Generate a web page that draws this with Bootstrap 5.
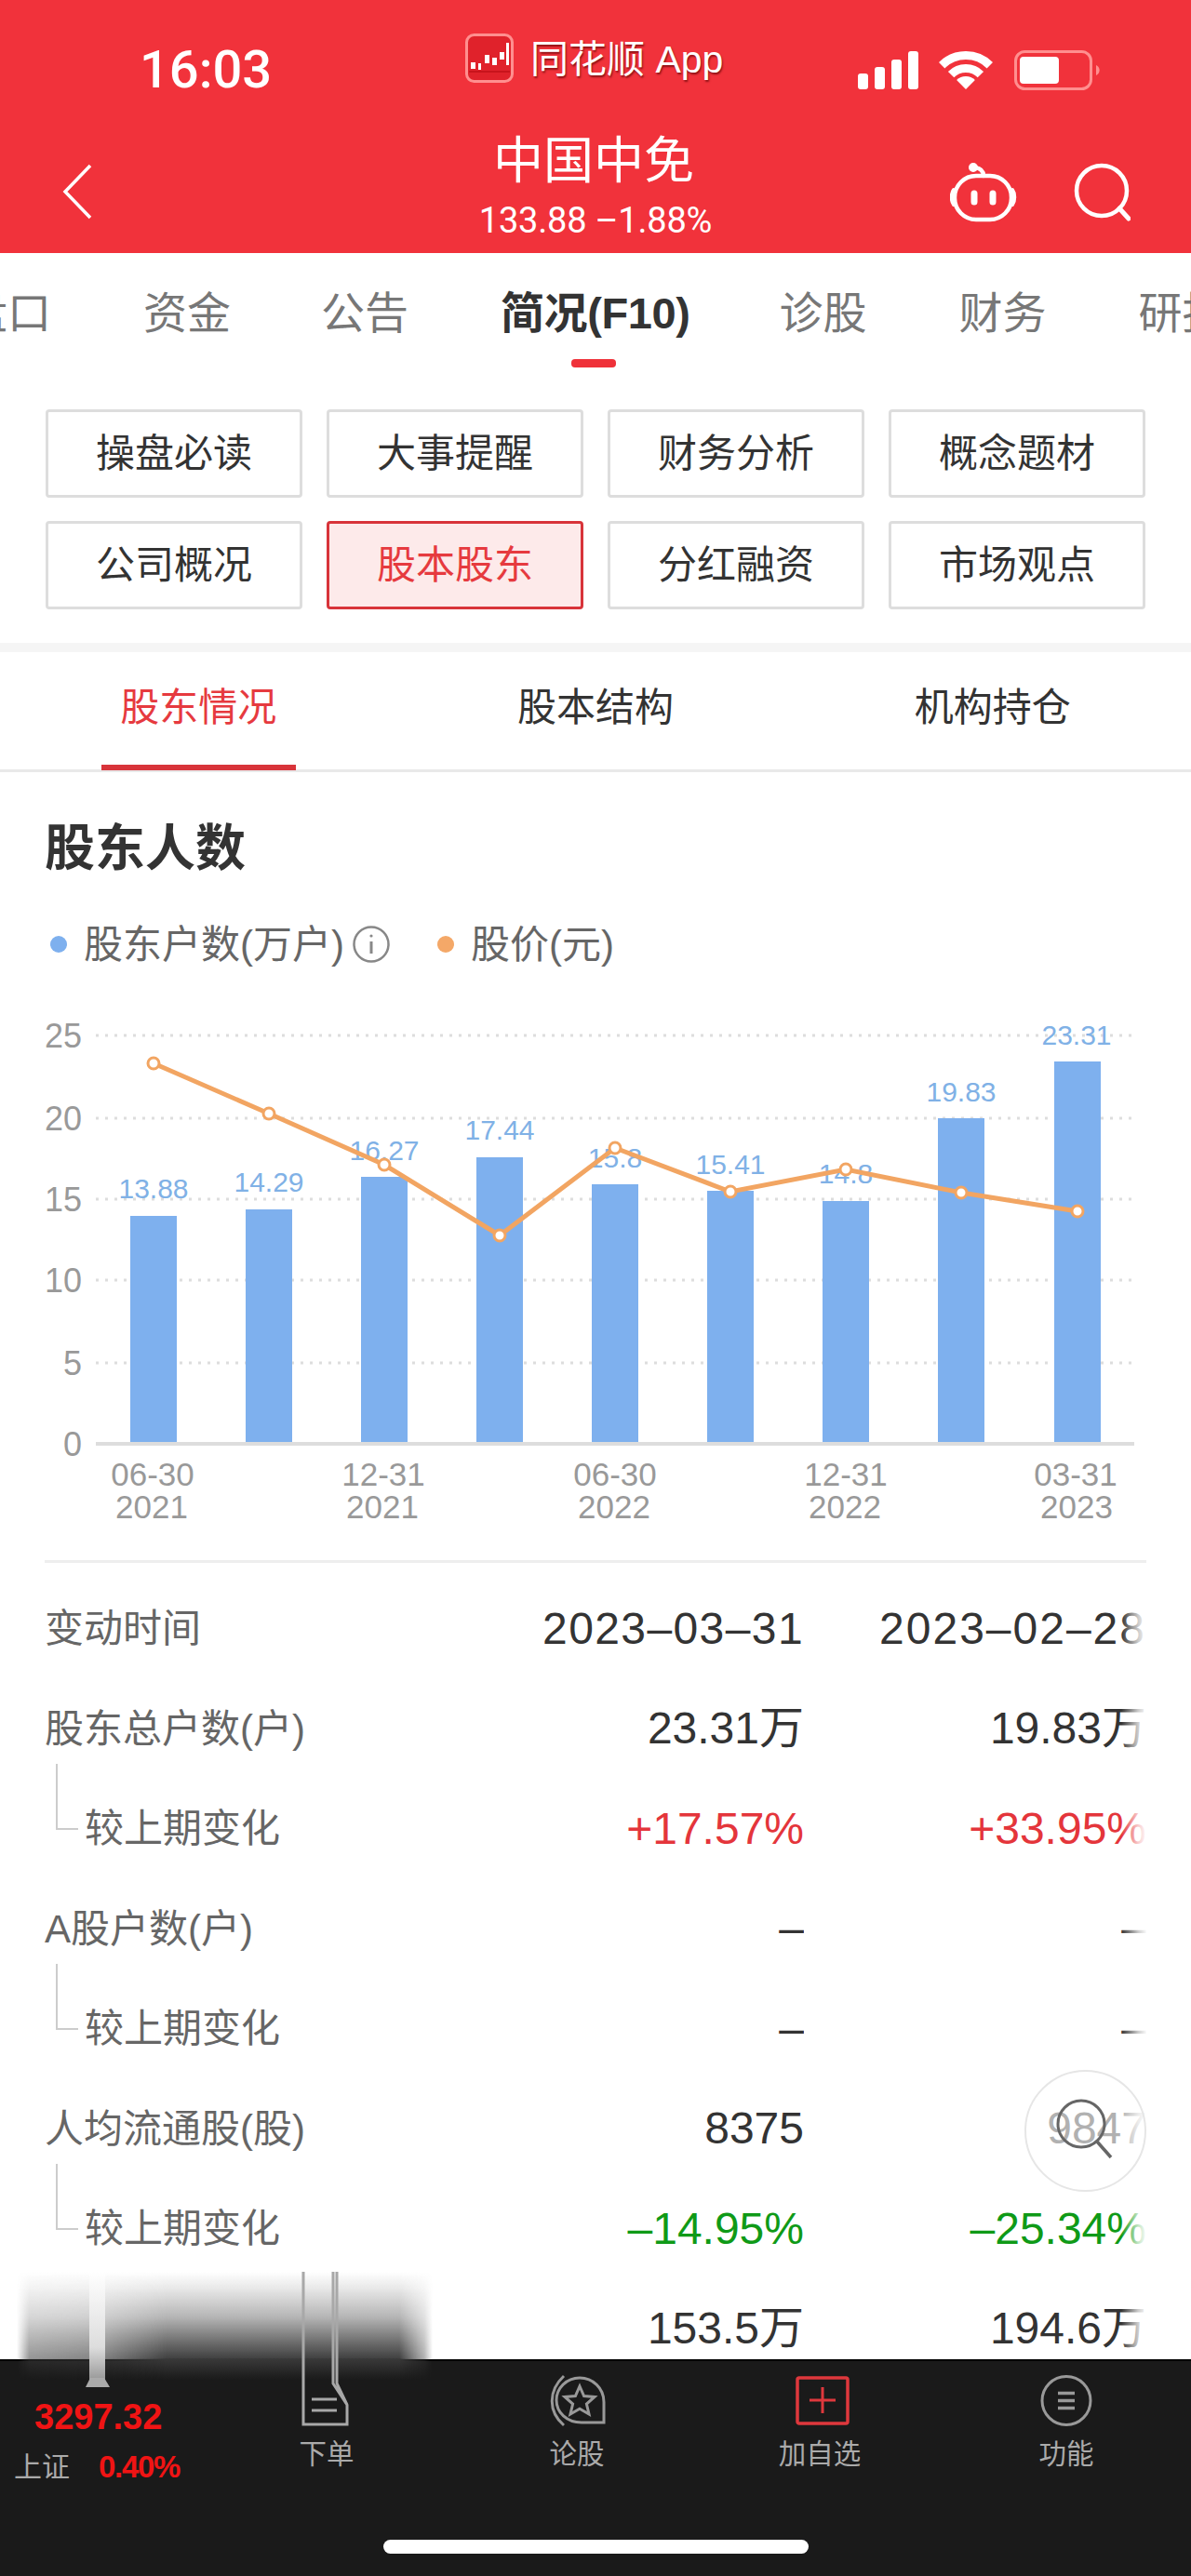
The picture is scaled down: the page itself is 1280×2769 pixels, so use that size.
<!DOCTYPE html>
<html lang="zh"><head><meta charset="utf-8"><title>中国中免</title>
<link href="https://cdn.jsdelivr.net/npm/bootstrap@5.3.0/dist/css/bootstrap.min.css" rel="stylesheet">
<style>
html,body{margin:0;background:#fff}
body{font-family:"Liberation Sans","Noto Sans CJK SC",sans-serif;color:#333}
.screen{width:1280px;height:2769px;overflow:hidden;position:relative}
.hdr{background:#f1323b;height:272px;color:#fff}
.status{display:grid;grid-template-columns:500px 300px 1fr;padding-top:36px;height:97px}
.clock{font-family:Roboto,sans-serif;font-weight:500;font-size:56px;line-height:78px;padding-left:150px}
.appname{font-size:41px;line-height:46px;padding-top:5px;text-shadow:1px 2px 2px rgba(90,0,0,.65);white-space:nowrap}
.navrow{display:grid;grid-template-columns:1fr auto 1fr;padding-top:48px}
.ttl{font-size:54px;line-height:56px;text-align:center;transform:translateX(-2px)}
.sub{font-family:Roboto,sans-serif;font-size:38px;line-height:38px;margin-top:17px;text-align:center;letter-spacing:-.2px;white-space:nowrap}
.tabs{display:flex;gap:99px;height:124px;margin-left:-39px;padding-top:38px;font-size:47px;line-height:54px;color:#777;white-space:nowrap;overflow:hidden}
.tabs .gap1{margin-right:-2px}
.tabs .on{color:#333;font-weight:700;position:relative;letter-spacing:-.4px;margin-right:-3px}
.tabs .on::after{content:"";position:absolute;left:76px;top:76px;width:48px;height:9px;border-radius:4px;background:#ef3139}
.btns{display:grid;grid-template-columns:repeat(4,276px);gap:25px 26px;padding:44px 50px 36px 49px}
.chip{height:95px;border:3px solid #ddd;border-radius:4px;font-size:42px;display:flex;align-items:center;justify-content:center;color:#333}
.chip.on{border-color:#d8343a;background:#fdeaea;color:#e63a3f}
.gap10{height:10px;background:#f5f5f5}
.subtabs{display:grid;grid-template-columns:repeat(3,1fr);height:129px;border-bottom:3px solid #e9e9e9;text-align:center;font-size:42px;line-height:120px;color:#333}
.subtabs .on{color:#e63a3f;position:relative}
.subtabs .on::after{content:"";position:absolute;left:109px;bottom:-1px;width:209px;height:6px;background:#d8343a}
.h-title{font-size:54px;font-weight:700;line-height:60px;margin:52px 0 0 48px;color:#333}
.legend{display:flex;align-items:center;height:50px;margin:48px 0 0 54px;font-size:42px;color:#666;white-space:nowrap}
.dot{width:18px;height:18px;border-radius:50%;margin-right:18px}
.info{width:40px;height:40px;margin:0 0 0 9px}
.dot2{margin-left:51px}
.chart{display:block;margin-top:21px}
.divd{height:3px;background:#eee;margin:0 48px 17px;opacity:1;border:0}
.trow{display:grid;grid-template-columns:516px 300px 368px;height:107.5px;align-items:center;margin-left:48px;position:relative;font-size:42px;color:#666}
.v{font-size:48px;color:#333;text-align:right;white-space:nowrap;overflow:hidden}
.date{letter-spacing:1.4px}
.date2{letter-spacing:2px}
.kid>div:first-child{padding-left:43px}
.kid::before{content:"";position:absolute;left:12px;top:-16px;width:24px;height:71px;border-left:2px solid #ccc;border-bottom:2px solid #ccc}
.up{color:#e4353b}.dn{color:#0f9a17}
.edgefade{position:absolute;left:1205px;top:1700px;width:28px;height:836px;background:linear-gradient(to right,rgba(255,255,255,0),rgba(255,255,255,.75) 65%,#fff)}
.lens{position:absolute;left:1101px;top:2225px;width:131px;height:131px;border-radius:50%;border:2px solid #e6e6e6;background:rgba(255,255,255,.62);display:flex;align-items:center;justify-content:center}
.main{height:2536px;overflow:hidden}
.tabbar{position:relative;height:233px;background:#1a1a1a;border-top:2px solid #000;display:grid;grid-template-columns:190px 322px 216px 306px 224px;text-align:center;color:#aaa;font-size:29.5px;padding-top:14px}
.tb-ic{height:57px;display:block;margin:0 auto 12px}
.tb-lb{line-height:34px}
.idx{text-align:left;padding-top:25px;position:relative}
.idx-p{color:#f01414;font-weight:700;font-size:38px;line-height:42px;padding-left:37px}
.idx-s{display:flex;line-height:40px;margin-top:13px;padding-left:15px;font-size:30px;color:#aaa;white-space:nowrap}
.idx-s span{color:#f01414;font-size:33px;font-weight:700;margin-left:31px;letter-spacing:-1.3px}
.home{position:absolute;left:412px;bottom:24px;width:457px;height:15px;border-radius:8px;background:#fff}
.ghost{position:absolute;left:18px;top:2442px;width:447px;height:116px;
 background:linear-gradient(to bottom,rgba(70,70,70,0) 0,rgba(70,70,70,.12) 15%,rgba(70,70,70,.4) 42%,rgba(62,62,62,.8) 68%,rgba(60,60,60,.97) 80%,rgba(58,58,58,1) 80.2%,rgba(26,26,26,1) 100%);
 -webkit-mask-image:linear-gradient(to right,transparent 0,rgba(0,0,0,.55) 3%,rgba(0,0,0,.65) 20%,#000 36%,#000 92%,rgba(0,0,0,.4) 98%,transparent 100%);mask-image:linear-gradient(to right,transparent 0,rgba(0,0,0,.55) 3%,rgba(0,0,0,.65) 20%,#000 36%,#000 92%,rgba(0,0,0,.4) 98%,transparent 100%)}
.ghost-ink{position:absolute;left:0;top:2442px}
.logo-row{gap:18px}
.st-ic{padding:18px 97px 0 0}
.back-w{padding:31px 0 0 67px}
.nav-ic{padding:28px 65px 0 0}
.adj{transform:translateX(3px)}
</style></head><body>
<div class="screen">
<div class="main">
<header class="hdr">
 <div class="status">
  <div class="clock">16:03</div>
  <div class="d-flex logo-row">
   <svg width="52" height="53" viewBox="0 0 52 53"><rect x="1.5" y="1.5" width="49" height="50" rx="8" fill="#e0222b" stroke="#ff8f8f" stroke-width="3"/><g fill="#fff"><rect x="6" y="31" width="5" height="7"/><rect x="14" y="32" width="3" height="7"/><rect x="21" y="23" width="5" height="9"/><rect x="29" y="26" width="5" height="8"/><rect x="37" y="20" width="5" height="8"/><rect x="44" y="10" width="3" height="24"/></g><path d="M4 41H48" stroke="#c8141c" stroke-width="2"/></svg>
   <div class="appname">同花顺 App</div>
  </div>
  <div class="d-flex justify-content-end st-ic">
   <svg width="261" height="44" viewBox="0 0 261 44" fill="#fff"><rect x="0" y="25" width="11" height="17" rx="3"/><rect x="18" y="18" width="11" height="24" rx="3"/><rect x="36" y="10" width="11" height="32" rx="3"/><rect x="54" y="1" width="11" height="41" rx="3"/><path d="M90.2 16.2A36.5 36.5 0 0 1 141.800 16.2M100.1 26.1A22.5 22.5 0 0 1 131.900 26.1" fill="none" stroke="#fff" stroke-width="9"/><path d="M116 42L106.1 32.1A14 14 0 0 1 125.900 32.1Z"/><rect x="169.5" y="1.5" width="81" height="40" rx="10" fill="none" stroke="#ff8f8f" stroke-width="3"/><rect x="174" y="7" width="42" height="29" rx="4"/><path d="M256 16a6 6 0 0 1 0 11z" fill="#ff8f8f"/></svg>
  </div>
 </div>
 <div class="navrow">
  <div class="back-w"><svg width="32" height="60" viewBox="0 0 32 60"><path d="M30 2L3 30L30 58" fill="none" stroke="#fff" stroke-width="3.5"/></svg></div>
  <div><div class="ttl">中国中免</div><div class="sub">133.88 –1.88%</div></div>
  <div class="d-flex justify-content-end nav-ic">
   <svg width="194" height="66" viewBox="0 0 194 66" fill="none" stroke="#fff" stroke-width="4.5" stroke-linecap="round"><circle cx="25" cy="7" r="3.5" fill="#fff" stroke-width="3"/><path d="M27 7C33 8 36 11 36 16"/><rect x="5" y="16" width="61" height="47" rx="23"/><path d="M4 31C1 35 1 43 4 47M67 31C70 35 70 43 67 47" stroke-width="4"/><path d="M26 35V44M46 35V44" stroke-width="7"/><circle cx="163" cy="32" r="27" stroke-width="4.5"/><path d="M182 51L192 62" stroke-width="5"/></svg>
  </div>
 </div>
</header>
<nav class="tabs"><span>盘口</span><span class="gap1">资金</span><span>公告</span><span class="on">简况(F10)</span><span>诊股</span><span>财务</span><span>研报</span></nav>
<section class="btns">
 <div class="chip">操盘必读</div><div class="chip">大事提醒</div><div class="chip">财务分析</div><div class="chip">概念题材</div>
 <div class="chip">公司概况</div><div class="chip on">股本股东</div><div class="chip">分红融资</div><div class="chip">市场观点</div>
</section>
<div class="gap10"></div>
<div class="subtabs"><div class="on">股东情况</div><div>股本结构</div><div>机构持仓</div></div>
<h2 class="h-title">股东人数</h2>
<div class="legend"><i class="dot" style="background:#7eb0ee"></i>股东户数(万户)
 <svg class="info" viewBox="0 0 40 40" fill="none" stroke="#888" stroke-width="2.5"><circle cx="20" cy="20" r="18.5"/><path d="M20 17V30" stroke-width="3"/><circle cx="20" cy="11" r="1.6" fill="#888" stroke="none"/></svg>
 <i class="dot dot2" style="background:#f4a868"></i>股价(元)</div>
<svg class="chart" width="1280" height="616" viewBox="0 1060 1280 616" font-family="Liberation Sans, sans-serif">
 <g stroke="#ddd" stroke-width="3" stroke-dasharray="3 7"><path d="M103 1112H1216M103 1201H1216M103 1288H1216M103 1375H1216M103 1464H1216"/></g>
 <g fill="#7eb0ee"><rect x="140" y="1306" width="50" height="245"/><rect x="264" y="1299" width="50" height="252"/><rect x="388" y="1264" width="50" height="287"/><rect x="512" y="1243" width="50" height="308"/><rect x="636" y="1272" width="50" height="279"/><rect x="760" y="1279" width="50" height="272"/><rect x="884" y="1290" width="50" height="261"/><rect x="1008" y="1201" width="50" height="350"/><rect x="1133" y="1140" width="50" height="411"/></g>
 <path d="M103 1551H1219" stroke="#ddd" stroke-width="4"/>
 <g fill="#80b1e6" font-size="30" text-anchor="middle"><text x="165" y="1287">13.88</text><text x="289" y="1280">14.29</text><text x="413" y="1246">16.27</text><text x="537" y="1224">17.44</text><text x="661" y="1254">15.8</text><text x="785" y="1261">15.41</text><text x="909" y="1271">14.8</text><text x="1033" y="1183">19.83</text><text x="1157" y="1122">23.31</text></g>
 <g fill="#999" font-size="36" text-anchor="end"><text x="88" y="1125">25</text><text x="88" y="1214">20</text><text x="88" y="1301">15</text><text x="88" y="1388">10</text><text x="88" y="1477">5</text><text x="88" y="1564">0</text></g>
 <g fill="#999" font-size="35" text-anchor="middle"><text x="164" y="1596">06-30</text><text x="163" y="1631">2021</text><text x="412" y="1596">12-31</text><text x="411" y="1631">2021</text><text x="661" y="1596">06-30</text><text x="660" y="1631">2022</text><text x="909" y="1596">12-31</text><text x="908" y="1631">2022</text><text x="1156" y="1596">03-31</text><text x="1157" y="1631">2023</text></g>
 <polyline points="165,1142 289,1196 413,1251 537,1327 661,1233 785,1280 909,1256 1033,1281 1158,1301" fill="none" stroke="#f2a562" stroke-width="5"/>
 <g fill="#fff" stroke="#f2a562" stroke-width="3"><circle cx="165" cy="1142" r="6"/><circle cx="289" cy="1196" r="6"/><circle cx="413" cy="1251" r="6"/><circle cx="537" cy="1327" r="6"/><circle cx="661" cy="1233" r="6"/><circle cx="785" cy="1280" r="6"/><circle cx="909" cy="1256" r="6"/><circle cx="1033" cy="1281" r="6"/><circle cx="1158" cy="1301" r="6"/></g>
</svg>
<hr class="divd">
<div class="trow"><div>变动时间</div><div class="v date">2023–03–31</div><div class="v date2">2023–02–28</div></div>
<div class="trow"><div>股东总户数(户)</div><div class="v">23.31万</div><div class="v">19.83万</div></div>
<div class="trow kid"><div>较上期变化</div><div class="v up">+17.57%</div><div class="v up">+33.95%</div></div>
<div class="trow"><div>A股户数(户)</div><div class="v">–</div><div class="v">–</div></div>
<div class="trow kid"><div>较上期变化</div><div class="v">–</div><div class="v">–</div></div>
<div class="trow"><div>人均流通股(股)</div><div class="v">8375</div><div class="v">9847</div></div>
<div class="trow kid"><div>较上期变化</div><div class="v dn">–14.95%</div><div class="v dn">–25.34%</div></div>
<div class="trow"><div></div><div class="v">153.5万</div><div class="v">194.6万</div></div>
</div>
<div class="edgefade"></div>
<div class="lens"><svg width="70" height="70" viewBox="0 0 70 70" fill="none" stroke="#666" stroke-width="3"><circle cx="30" cy="27" r="25"/><path d="M47 46L62 63" stroke-width="3.5"/></svg></div>
<footer class="tabbar">
 <div class="idx"><div class="idx-p">3297.32</div><div class="idx-s">上证<span>0.40%</span></div></div>
 <div><div class="tb-ic"></div><div class="tb-lb">下单</div></div>
 <div><svg class="tb-ic" width="62" height="57" viewBox="0 0 62 57" fill="none" stroke="#999" stroke-width="3"><path d="M17 2C0 18 0 40 17 55"/><path d="M60 52H36C20 52 9 41 9 28S20 4 34 4 60 15 60 30Z"/><path d="M34 13l4.600 10.500 11.400 1-8.600 7.500 2.600 11-10-5.800-10 5.800 2.600-11-8.600-7.500 11.400-1z"/></svg><div class="tb-lb">论股</div></div>
 <div><svg class="tb-ic adj" width="58" height="57" viewBox="0 0 58 57" fill="none" stroke="#df383d" stroke-width="3.5"><rect x="2" y="4" width="54" height="49" rx="2"/><path d="M29 14V42M15 28H43" stroke-width="3"/></svg><div class="tb-lb">加自选</div></div>
 <div><svg class="tb-ic" width="56" height="57" viewBox="0 0 56 57" fill="none" stroke="#999" stroke-width="3"><circle cx="28" cy="28.500" r="26"/><path d="M19 20.500H37M19 28.500H37M19 36.500H37" stroke-width="3.500"/></svg><div class="tb-lb">功能</div></div>
 <div class="home"></div>
</footer>
<div class="ghost"></div>
<svg class="ghost-ink" width="470" height="170" viewBox="0 2442 470 170" fill="none">
 <defs><linearGradient id="st" x1="0" y1="0" x2="0" y2="1"><stop offset="0" stop-color="#fff"/><stop offset=".7" stop-color="#ddd"/><stop offset="1" stop-color="#999"/></linearGradient></defs>
 <rect x="96" y="2442" width="17" height="116" fill="url(#st)"/>
 <path d="M97 2556H112L118 2566H92Z" fill="#aaa"/>
 <path d="M326 2442V2606H373V2585L358 2562V2442M362 2442V2562L373 2585M335 2579H362M335 2591H362" stroke="#a8a8a8" stroke-width="3"/>
</svg>
</div>
</body></html>
